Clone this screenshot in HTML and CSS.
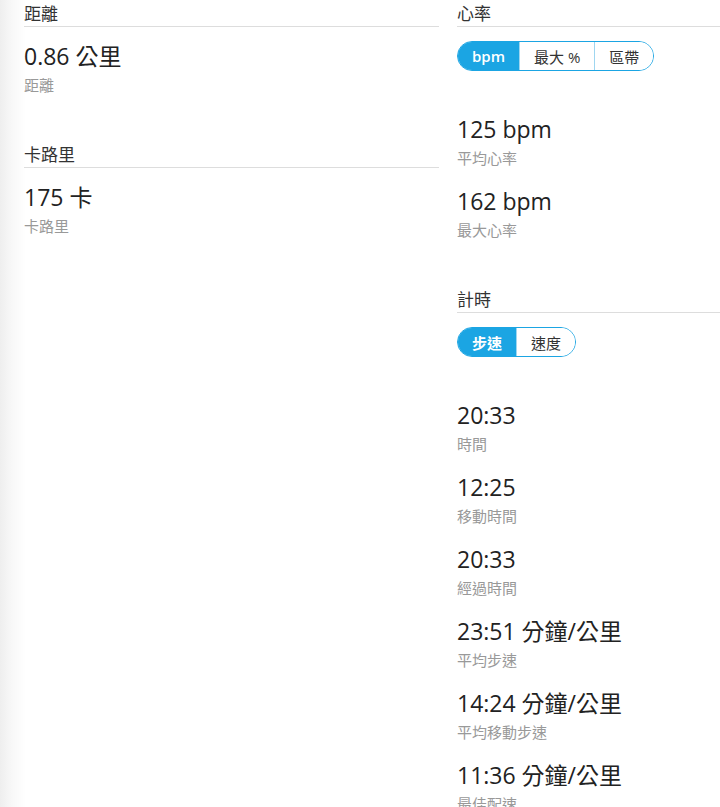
FILE: index.html
```html
<!DOCTYPE html>
<html lang="zh-Hant">
<head>
    <meta charset="UTF-8">
    <meta name="viewport" content="width=device-width, initial-scale=1.0">
    <title>活動詳細資料</title>
    <link rel="stylesheet" href="styles.css">
</head>
<body>
    <main class="stats">
        <div class="column">
            <section class="section">
                <h2 class="section-title">距離</h2>
                <div class="stat">
                    <div class="stat-value">0.86 公里</div>
                    <div class="stat-label">距離</div>
                </div>
            </section>
            <section class="section">
                <h2 class="section-title">卡路里</h2>
                <div class="stat">
                    <div class="stat-value">175 卡</div>
                    <div class="stat-label">卡路里</div>
                </div>
            </section>
        </div>

        <div class="column">
            <section class="section">
                <h2 class="section-title">心率</h2>
                <div class="toggle">
                    <button class="toggle-btn active">bpm</button>
                    <button class="toggle-btn">最大 %</button>
                    <button class="toggle-btn">區帶</button>
                </div>
                <div class="stat">
                    <div class="stat-value">125 bpm</div>
                    <div class="stat-label">平均心率</div>
                </div>
                <div class="stat">
                    <div class="stat-value">162 bpm</div>
                    <div class="stat-label">最大心率</div>
                </div>
            </section>
            <section class="section">
                <h2 class="section-title">計時</h2>
                <div class="toggle">
                    <button class="toggle-btn active">步速</button>
                    <button class="toggle-btn">速度</button>
                </div>
                <div class="stat">
                    <div class="stat-value">20:33</div>
                    <div class="stat-label">時間</div>
                </div>
                <div class="stat">
                    <div class="stat-value">12:25</div>
                    <div class="stat-label">移動時間</div>
                </div>
                <div class="stat">
                    <div class="stat-value">20:33</div>
                    <div class="stat-label">經過時間</div>
                </div>
                <div class="stat">
                    <div class="stat-value">23:51 分鐘/公里</div>
                    <div class="stat-label">平均步速</div>
                </div>
                <div class="stat">
                    <div class="stat-value">14:24 分鐘/公里</div>
                    <div class="stat-label">平均移動步速</div>
                </div>
                <div class="stat">
                    <div class="stat-value">11:36 分鐘/公里</div>
                    <div class="stat-label">最佳配速</div>
                </div>
            </section>
        </div>
    </main>
</body>
</html>
```

FILE: styles.css
```css
* {
    margin: 0;
    padding: 0;
    box-sizing: border-box;
}

body {
    font-family: 'Open Sans', 'Noto Sans CJK TC', sans-serif;
    color: #222;
    background: linear-gradient(to right, #eeeeee 0, #f8f8f8 12px, #fff 26px);
    min-height: 100vh;
}

.stats {
    display: grid;
    grid-template-columns: 415px 1fr;
    column-gap: 18px;
    padding-left: 24px;
}

/* the last stat's bottom margin collapses into this one */
.section {
    margin-bottom: 46px;
}

.section-title {
    font-size: 17px;
    font-weight: normal;
    line-height: 25px;
    padding-top: 1px;
    color: #333;
    border-bottom: 1px solid #ddd;
}

.stat {
    margin-top: 14px;
    margin-bottom: 18px;
}

.toggle + .stat {
    margin-top: 43px;
}

.stat + .stat {
    margin-top: 0;
}

.stat-value {
    font-size: 23px;
    line-height: 30px;
    color: #222;
}

.stat-label {
    font-size: 15px;
    line-height: 20px;
    margin-top: 4px;
    color: #999;
}

.toggle {
    display: inline-flex;
    margin-top: 14px;
    height: 30px;
    border: 1px solid #1ba5e3;
    border-radius: 15px;
    overflow: hidden;
}

.toggle-btn {
    font-family: inherit;
    font-size: 15px;
    color: #333;
    background: #fff;
    border: none;
    border-left: 1px solid #9fd6f0;
    padding: 0 14px;
    cursor: pointer;
}

.toggle-btn:first-child {
    border-left: none;
}

.toggle-btn.active {
    background: #1ba5e3;
    color: #fff;
    font-weight: 600;
}
```
